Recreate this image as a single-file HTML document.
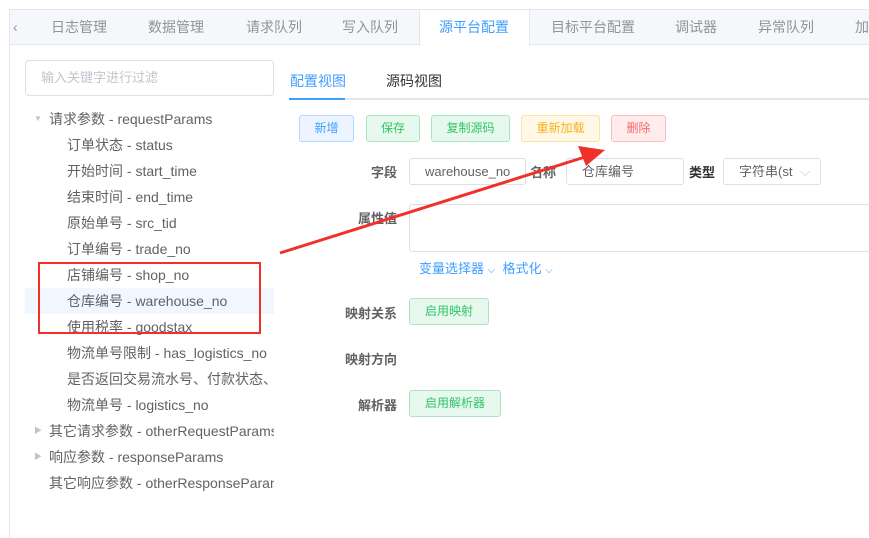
<!DOCTYPE html>
<html><head><meta charset="utf-8"><style>
*{box-sizing:border-box;margin:0;padding:0}
body{width:869px;height:538px;background:#fff;font-family:"Liberation Sans","Noto Sans CJK SC",sans-serif;font-size:13px;color:#606266;position:relative;overflow:hidden}
.a{position:absolute;white-space:nowrap}
.tabbar{position:absolute;left:9px;top:9px;width:870px;height:36px;background:#f5f7fa;border:1px solid #e4e7ed;border-right:none}
.tab{position:absolute;top:9px;font-size:14px;color:#909399;line-height:36px}
.btn{position:absolute;height:27px;border:1px solid;border-radius:3px;font-size:12px;text-align:center;line-height:25px}
.inp{position:absolute;border:1px solid #dcdfe6;border-radius:3px;height:27px;line-height:25px;font-size:13px;padding-left:15px;color:#606266}
.lbl{position:absolute;font-size:13px;color:#606266;font-weight:bold;text-align:right;width:80px;left:317px}
.row{position:absolute;left:67px;font-size:14px;color:#606266;line-height:26px;white-space:nowrap}
</style></head><body>
<div class="a" style="left:9px;top:45px;width:1px;height:493px;background:#e4e7ed"></div>
<div class="tabbar"></div>
<div class="a" style="left:419px;top:9px;width:111px;height:37px;background:#fff;border:1px solid #e4e7ed;border-bottom:none"></div>
<div class="tab" style="left:13px">‹</div>
<div class="tab" style="left:51px">日志管理</div>
<div class="tab" style="left:148px">数据管理</div>
<div class="tab" style="left:246px">请求队列</div>
<div class="tab" style="left:342px">写入队列</div>
<div class="tab" style="left:439px;color:#409eff">源平台配置</div>
<div class="tab" style="left:551px">目标平台配置</div>
<div class="tab" style="left:675px">调试器</div>
<div class="tab" style="left:758px">异常队列</div>
<div class="tab" style="left:855px">加</div>

<div class="a" style="left:25px;top:60px;width:249px;height:36px;border:1px solid #dcdfe6;border-radius:4px;padding-left:15px;line-height:34px;color:#c0c4cc">输入关键字进行过滤</div>
<div class="a" style="left:25px;top:288px;width:249px;height:26px;background:#f0f7ff"></div>
<div class="a" style="left:34px;top:106px;font-size:8px;color:#c0c4cc;line-height:26px">▼</div>
<div class="row" style="left:49px;top:106px">请求参数 - requestParams</div>
<div class="row" style="top:132px">订单状态 - status</div>
<div class="row" style="top:158px">开始时间 - start_time</div>
<div class="row" style="top:184px">结束时间 - end_time</div>
<div class="row" style="top:210px">原始单号 - src_tid</div>
<div class="row" style="top:236px">订单编号 - trade_no</div>
<div class="row" style="top:262px">店铺编号 - shop_no</div>
<div class="row" style="top:288px">仓库编号 - warehouse_no</div>
<div class="row" style="top:314px">使用税率 - goodstax</div>
<div class="row" style="top:340px">物流单号限制 - has_logistics_no</div>
<div class="row" style="top:366px;width:207px;overflow:hidden">是否返回交易流水号、付款状态、</div>
<div class="row" style="top:392px">物流单号 - logistics_no</div>
<div class="a" style="left:34px;top:418px;font-size:8px;color:#c0c4cc;line-height:26px">▶</div>
<div class="row" style="left:49px;top:418px;width:225px;overflow:hidden">其它请求参数 - otherRequestParams</div>
<div class="a" style="left:34px;top:444px;font-size:8px;color:#c0c4cc;line-height:26px">▶</div>
<div class="row" style="left:49px;top:444px">响应参数 - responseParams</div>
<div class="row" style="left:49px;top:470px;width:225px;overflow:hidden">其它响应参数 - otherResponseParams</div>
<div class="a" style="left:38px;top:262px;width:223px;height:72px;border:2px solid #f0302a"></div>

<div class="a" style="left:290px;top:71px;font-size:14px;color:#409eff">配置视图</div>
<div class="a" style="left:386px;top:71px;font-size:14px;color:#303133">源码视图</div>
<div class="a" style="left:289px;top:98px;width:580px;height:2px;background:#e4e7ed"></div>
<div class="a" style="left:289px;top:98px;width:56px;height:2px;background:#409eff"></div>

<div class="btn" style="left:299px;top:115px;width:55px;background:#ecf5ff;border-color:#b3d8ff;color:#409eff">新增</div>
<div class="btn" style="left:366px;top:115px;width:54px;background:#e7f9ee;border-color:#a8e6bf;color:#30c566">保存</div>
<div class="btn" style="left:431px;top:115px;width:79px;background:#e7f9ee;border-color:#a8e6bf;color:#30c566">复制源码</div>
<div class="btn" style="left:521px;top:115px;width:79px;background:#fff8e6;border-color:#fde2a0;color:#f5b31b">重新加载</div>
<div class="btn" style="left:611px;top:115px;width:55px;background:#ffeded;border-color:#fbb;color:#f56c6c">删除</div>

<div class="lbl" style="top:162px">字段</div>
<div class="inp" style="left:409px;top:158px;width:117px">warehouse_no</div>
<div class="a" style="left:530px;top:162px;color:#606266;font-weight:bold">名称</div>
<div class="inp" style="left:566px;top:158px;width:118px">仓库编号</div>
<div class="a" style="left:689px;top:162px;color:#303133;font-weight:bold">类型</div>
<div class="inp" style="left:723px;top:158px;width:98px">字符串(st <span style="color:#c0c4cc;margin-left:4px">⌵</span></div>
<div class="lbl" style="top:208px">属性值</div>
<div class="a" style="left:409px;top:204px;width:470px;height:48px;border:1px solid #dcdfe6;border-radius:3px"></div>
<div class="a" style="left:419px;top:258px;color:#409eff">变量选择器 <span style="font-size:10px">⌵</span>&nbsp; 格式化 <span style="font-size:10px">⌵</span></div>
<div class="lbl" style="top:303px">映射关系</div>
<div class="btn" style="left:409px;top:298px;width:80px;background:#e7f9ee;border-color:#a8e6bf;color:#30c566">启用映射</div>
<div class="lbl" style="top:349px">映射方向</div>
<div class="lbl" style="top:395px">解析器</div>
<div class="btn" style="left:409px;top:390px;width:92px;background:#e7f9ee;border-color:#a8e6bf;color:#30c566">启用解析器</div>

<svg class="a" style="left:0;top:0" width="869" height="538"><line x1="280" y1="253" x2="585" y2="157" stroke="#f0302a" stroke-width="3"/><polygon points="605,150 578,146 586,166" fill="#f0302a"/></svg>
</body></html>
